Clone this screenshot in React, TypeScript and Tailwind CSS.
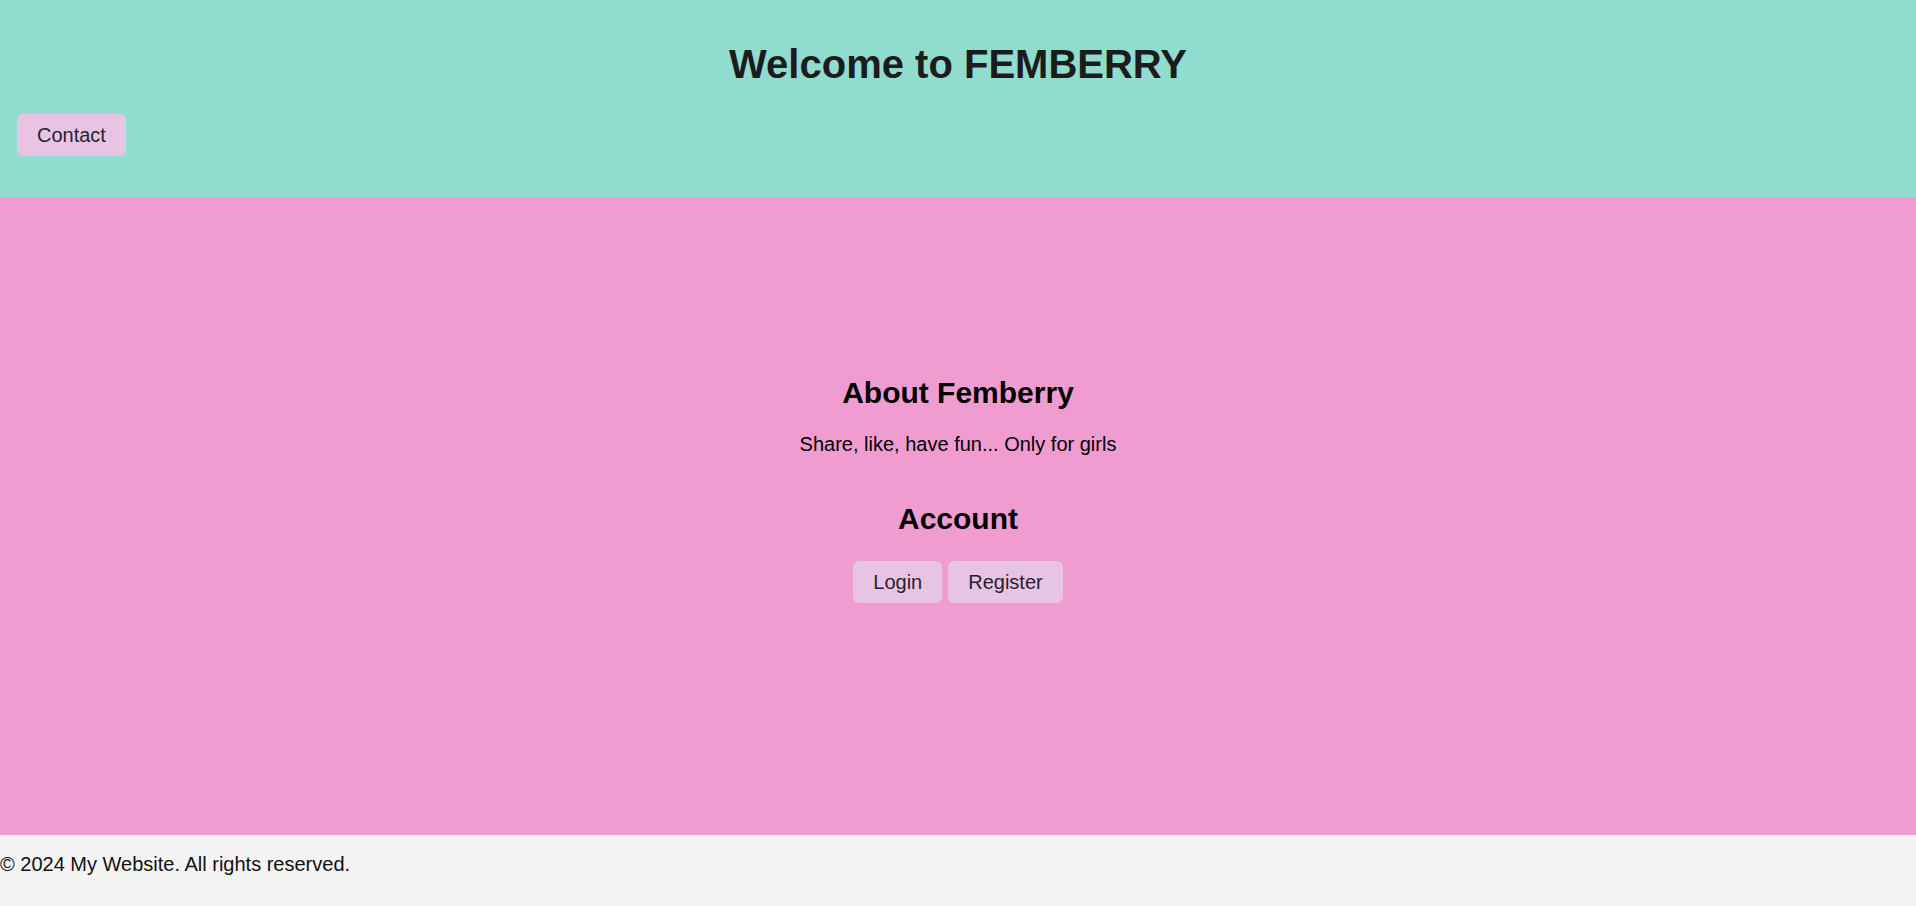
export default function App() {
  return (
    <div className="min-h-screen flex flex-col font-['Liberation_Sans',Arial,sans-serif] text-[20px] text-black">
      <header className="bg-[#90ddd0] pt-[14px] pb-[41px] px-[17px] h-[197px]">
        <h1 className="text-center text-[40px] leading-[46px] font-bold text-[#1c1c1c] my-[27px]">
          Welcome to FEMBERRY
        </h1>
        <nav>
          <button className="bg-[#e8c4e4] text-[#2a1e2e] px-5 h-[42px] rounded-md leading-[23px]">
            Contact
          </button>
        </nav>
      </header>

      <main className="bg-[#f09cd0] h-[638px] pt-[178px] flex flex-col items-center text-center">
        <h2 className="text-[30px] leading-[35px] font-bold">About Femberry</h2>
        <p className="mt-[23px] leading-[23px]">Share, like, have fun... Only for girls</p>
        <h2 className="mt-[45px] text-[30px] leading-[35px] font-bold">Account</h2>
        <div className="mt-[25px] flex gap-[6px]">
          <button className="bg-[#e8c4e4] text-[#2a1e2e] px-5 h-[42px] rounded-md leading-[23px]">
            Login
          </button>
          <button className="bg-[#e8c4e4] text-[#2a1e2e] px-5 h-[42px] rounded-md leading-[23px]">
            Register
          </button>
        </div>
      </main>

      <footer className="bg-[#f4f4f4] h-[71px] pt-[18px]">
        <p className="leading-[23px] text-[#111]">© 2024 My Website. All rights reserved.</p>
      </footer>
    </div>
  );
}
